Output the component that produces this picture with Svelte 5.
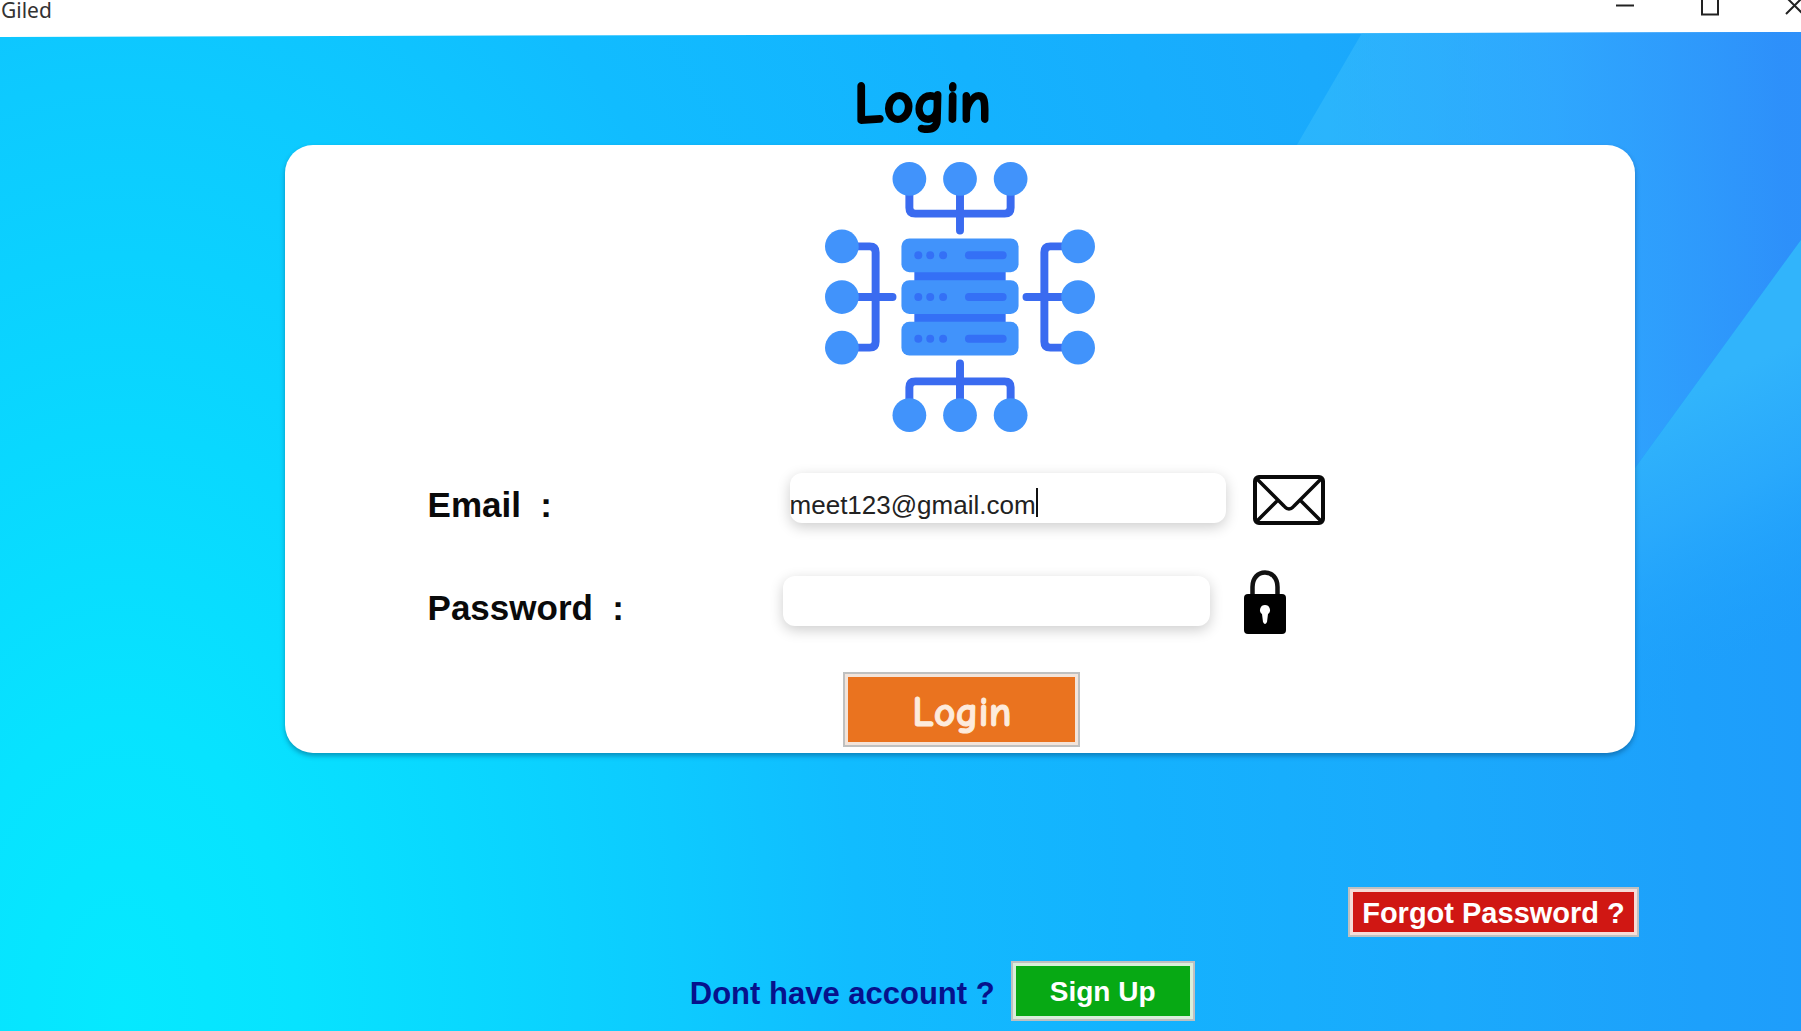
<script>
  let email = $state('meet123@gmail.com');
  let password = $state('');
</script>

<div class="window">
  <svg class="backdrop" viewBox="0 0 1801 1031" preserveAspectRatio="none" aria-hidden="true">
    <defs>
      <radialGradient id="base" gradientUnits="userSpaceOnUse" cx="0" cy="0" r="1760" gradientTransform="translate(120 1010) scale(1 1.65)">
        <stop offset="0" stop-color="#05e9ff" />
        <stop offset="0.1" stop-color="#07e3ff" />
        <stop offset="0.2" stop-color="#09d8ff" />
        <stop offset="0.32" stop-color="#0dcaff" />
        <stop offset="0.42" stop-color="#11bcff" />
        <stop offset="0.58" stop-color="#14b2fe" />
        <stop offset="0.75" stop-color="#1aaafc" />
        <stop offset="0.9" stop-color="#1da0fb" />
        <stop offset="1" stop-color="#1f9bfb" />
      </radialGradient>
      <linearGradient id="ray" gradientUnits="userSpaceOnUse" x1="1330" y1="120" x2="1780" y2="100">
        <stop offset="0" stop-color="#3abffc" stop-opacity="0.5" />
        <stop offset="0.5" stop-color="#36a9ff" stop-opacity="0.7" />
        <stop offset="1" stop-color="#2f8ffa" stop-opacity="0.9" />
      </linearGradient>
      <linearGradient id="fold" gradientUnits="userSpaceOnUse" x1="1680" y1="400" x2="1800" y2="640">
        <stop offset="0" stop-color="#31b4fb" />
        <stop offset="0.4" stop-color="#2aaafc" stop-opacity="0.9" />
        <stop offset="1" stop-color="#1e9ffb" stop-opacity="0" />
      </linearGradient>
    </defs>
    <path d="M0 37L1801 32V1031H0Z" fill="url(#base)" />
    <path d="M1362 33L1801 32V240L1637 465L1500 652H1002Z" fill="url(#ray)" />
    <path d="M1801 240V740H1437Z" fill="url(#fold)" />
  </svg>

  <header class="titlebar">
    <span class="name">Giled</span>
    <div class="controls">
      <button aria-label="Minimize"><svg viewBox="0 0 20 20"><path d="M1 7.500H19" /></svg></button>
      <button aria-label="Maximize"><svg viewBox="0 0 20 20"><path d="M2 -1V16.500H18V-1" /></svg></button>
      <button aria-label="Close"><svg viewBox="0 0 20 20"><path d="M1 16L18 -1M1 -1L18 16" /></svg></button>
    </div>
  </header>

  <main>
    <h1>Login</h1>

    <form class="card" onsubmit={(e) => e.preventDefault()}>
      <svg class="emblem" viewBox="0 0 272 272" aria-hidden="true">
        <g fill="none" stroke="#3a6bf0" stroke-width="8" stroke-linecap="round">
          <path d="M85 28V46Q85 52 91 52H181Q187 52 187 46V28M136 28V69" />
          <path d="M85 244V227Q85 221 91 221H181Q187 221 187 227V244M136 244V203" />
          <path d="M28 85H45Q51 85 51 91V181Q51 187 45 187H28M28 136H68" />
          <path d="M244 85H227Q221 85 221 91V181Q221 187 227 187H244M244 136H203" />
        </g>
        <g fill="#4193fb">
          {#each [85, 136, 187] as p}
            <circle cx={p} cy="17" r="17" />
            <circle cx={p} cy="255" r="17" />
            <circle cx="17" cy={p} r="17" />
            <circle cx="255" cy={p} r="17" />
          {/each}
        </g>
        <rect x="90" y="100" width="92" height="72" fill="#3470f6" />
        {#each [77, 119, 161] as y}
          <rect x="77" {y} width="118" height="34" rx="8" fill="#4193fb" />
          {#each [94, 106, 119] as x}
            <circle cx={x} cy={y + 17} r="4" fill="#3470f6" />
          {/each}
          <rect x="141" y={y + 13} width="42" height="8" rx="4" fill="#3470f6" />
        {/each}
      </svg>

      <div class="row">
        <label for="email">Email&nbsp; :</label>
        <div class="field email">
          <input id="email" type="text" autocomplete="off" bind:value={email} />
          <span class="caret"></span>
        </div>
        <svg class="mail" viewBox="0 0 72 50" aria-hidden="true">
          <g fill="none" stroke="#0a0a0a" stroke-width="4" stroke-linejoin="round">
            <rect x="2" y="2" width="68" height="46" rx="4" />
            <path d="M4 4L31 31Q36 37 41 31L68 4M4 46L25 25M68 46L47 25" stroke-width="3.500" />
          </g>
        </svg>
      </div>

      <div class="row">
        <label class="narrow" for="password">Password&nbsp; :</label>
        <div class="field password">
          <input id="password" type="password" bind:value={password} />
        </div>
        <svg class="lock" viewBox="0 0 42 64" aria-hidden="true">
          <path d="M8.500 28V17C8.500 8 14 2.500 21 2.500S33.500 8 33.500 17V28" fill="none" stroke="#111" stroke-width="4.500" />
          <rect y="24" width="42" height="40" rx="4" />
          <path d="M21 35a5 5 0 0 1 3 9l-1 8q-2 4-4 0l-1-8a5 5 0 0 1 3-9Z" fill="#fff" />
        </svg>
      </div>

      <button class="login" type="submit">Login</button>
    </form>

    <button class="forgot">Forgot Password ?</button>

    <div class="signup-row">
      <span>Dont have account ?</span>
      <button class="signup">Sign Up</button>
    </div>
  </main>
</div>

<style>
  :global(body) {
    background: #fff;
  }

  .window {
    position: relative;
    min-height: 100vh;
    box-sizing: border-box;
    overflow: hidden;
    font-family: 'Liberation Sans', Arial, sans-serif;
    color: #0a0a0a;
  }

  .backdrop {
    position: absolute;
    inset: 0;
    width: 100%;
    height: 100%;
  }

  .titlebar,
  main {
    position: relative;
  }

  .titlebar {
    display: flex;
    justify-content: space-between;
    height: 34px;
  }

  .name {
    padding-left: 1px;
    font: 21px/20px 'Noto Sans', sans-serif;
    color: #333;
  }

  .controls {
    display: flex;
    gap: 65px;
    margin-right: -4px;
  }

  .controls button {
    width: 20px;
    height: 20px;
    padding: 0;
    border: 0;
    background: none;
  }

  .controls svg {
    display: block;
    margin-top: -5px;
    width: 20px;
    height: 20px;
    fill: none;
    stroke: #222;
    stroke-width: 2;
  }

  main {
    display: flex;
    flex-direction: column;
    padding-bottom: 8px;
  }

  h1 {
    margin: 0;
    padding: 28px 0 0 44px;
    font: bold 58px/83px 'Comic Sans MS', 'Comic Neue', Lato, sans-serif;
    text-align: center;
    color: #000;
    -webkit-text-stroke: 2px #000;
  }

  .card {
    display: flex;
    flex-direction: column;
    align-items: center;
    box-sizing: border-box;
    width: 75%;
    margin-left: 15.8%;
    padding: 17px 0 6px;
    border-radius: 28px;
    background: #fff;
    box-shadow: 0 3px 5px rgba(0, 50, 90, 0.4);
  }

  .emblem {
    width: 270px;
    height: 270px;
    margin-bottom: 41px;
  }

  .row {
    display: flex;
    align-items: center;
    align-self: stretch;
    height: 50px;
    margin-bottom: 53px;
    padding-left: 143px;
  }

  .row + .row {
    margin-bottom: 46px;
  }

  label {
    width: 362px;
    padding-top: 13px;
    font-size: 35px;
    line-height: 40px;
    font-weight: bold;
  }

  .narrow {
    width: 355px;
  }

  .field {
    display: flex;
    align-items: center;
    height: 50px;
    border-radius: 12px;
    background: #fff;
    box-shadow: 0 4px 14px rgba(0, 0, 0, 0.2);
  }

  .email {
    width: 436px;
  }

  .password {
    width: 427px;
  }

  input {
    flex: 1;
    min-width: 0;
    height: 30px;
    padding: 0;
    border: 0;
    outline: 0;
    background: none;
    font: 26px/30px 'Liberation Sans', Arial, sans-serif;
    color: #222;
  }

  .email input {
    flex: none;
    max-width: 430px;
    margin-top: 14px;
    field-sizing: content;
  }

  .caret {
    width: 2px;
    height: 29px;
    margin-top: 8px;
    background: #111;
  }

  .mail {
    width: 72px;
    height: 50px;
    margin-top: 4px;
    margin-left: 27px;
  }

  .lock {
    width: 42px;
    height: 64px;
    margin-top: 2px;
    margin-left: 34px;
  }

  .login,
  .forgot,
  .signup {
    box-sizing: border-box;
    padding: 0;
    border: 2px solid #bfc0c0;
    color: #fff;
    font-family: 'Liberation Sans', Arial, sans-serif;
    font-weight: bold;
  }

  .login {
    width: 237px;
    height: 75px;
    margin-left: 4px;
    padding-top: 5px;
    background: #ea731f;
    box-shadow: inset 0 0 0 3px #f3e4da;
    font-family: 'Comic Sans MS', 'Comic Neue', Lato, sans-serif;
    font-size: 42px;
    color: #fdebdc;
    -webkit-text-stroke: 1px #fdebdc;
  }

  .forgot {
    align-self: flex-end;
    width: 291px;
    height: 50px;
    margin: 134px 162px 24px 0;
    padding-top: 2px;
    background: #d01713;
    box-shadow: inset 0 0 0 3px #f6dcd8;
    font-size: 29px;
  }

  .signup-row {
    display: flex;
    align-items: center;
    gap: 16px;
    padding-left: 38.3%;
    font-size: 31px;
    font-weight: bold;
    color: #06128c;
  }

  .signup-row span {
    padding-top: 6px;
  }

  .signup {
    width: 184px;
    height: 60px;
    padding-top: 2px;
    background: #07a914;
    box-shadow: inset 0 0 0 3px #d9eedb;
    font-size: 28px;
  }
</style>
